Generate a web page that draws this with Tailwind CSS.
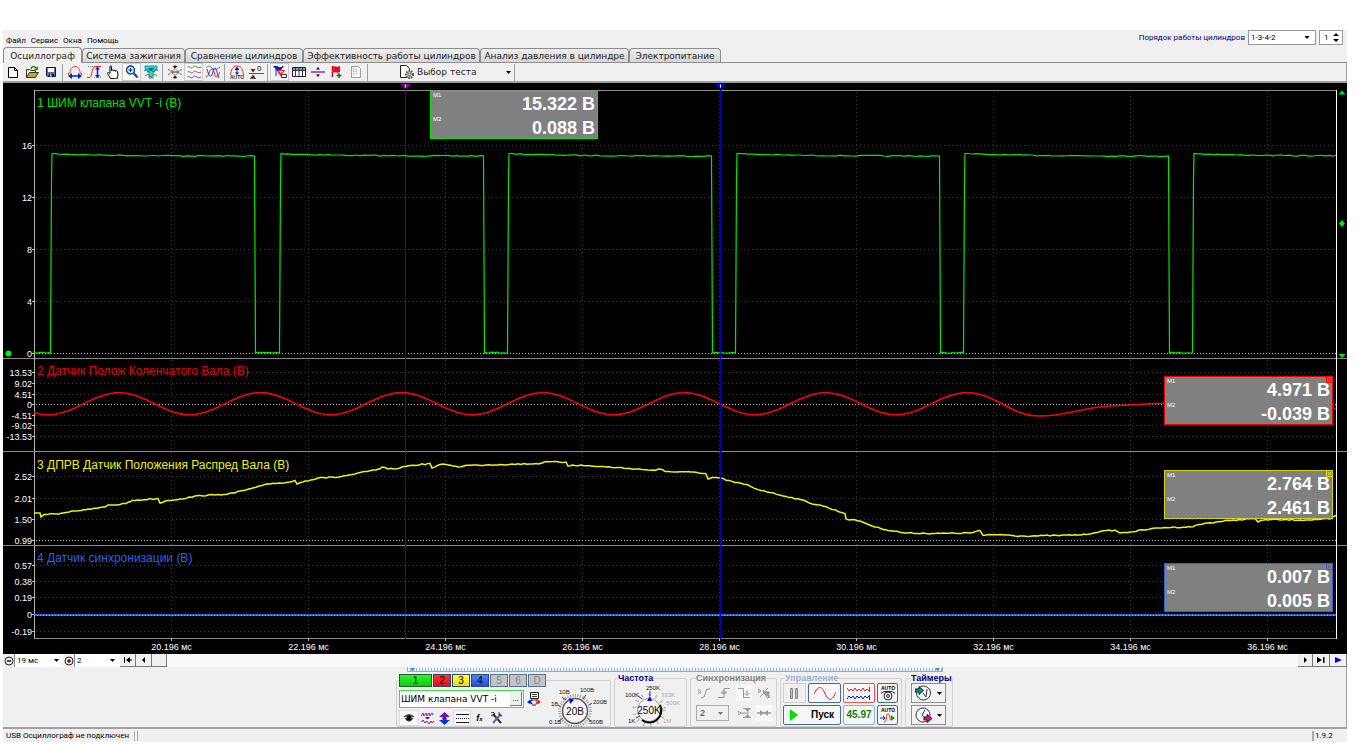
<!DOCTYPE html>
<html lang="ru">
<head>
<meta charset="utf-8">
<meta name="viewport" content="width=device-width, initial-scale=1">
<title>Осциллограф</title>
<script src="https://cdn.jsdelivr.net/npm/@tailwindcss/browser@4"></script>
</head>
<body class="bg-white pt-[30px] pl-[3px] pr-[10px] text-black font-['Liberation_Sans',sans-serif] text-[8px] leading-[10px]">
<svg width="0" height="0" class="absolute" aria-hidden="true">
  <defs>
    <pattern id="ticks" width="3" height="5" patternUnits="userSpaceOnUse"><rect width="3" height="5" fill="#eef5fb"/><rect width="1" height="3" y="1" fill="#8fb4d6"/></pattern>
    <symbol id="down" viewBox="0 0 5 3"><path d="M0 0h5L2.500 3z" fill="#000"/></symbol>
  </defs>
</svg>
<div class="bg-[#f0f0f0]">
  <header class="flex h-[17px] items-start justify-between font-['Roboto','Liberation_Sans',sans-serif]">
    <nav class="flex gap-[5px] pl-[3px] pt-[6px]">
      <a href="#">Файл</a><a href="#">Сервис</a><a href="#">Окна</a><a href="#">Помощь</a>
    </nav>
    <div class="flex items-center gap-[3px] pr-[4px]">
      <label for="order" class="text-[#000080]">Порядок работы цилиндров</label>
      <div class="flex h-[15px] w-[68px] items-center border border-[#999] bg-white pr-[5px]">
        <select id="order" class="min-w-0 flex-1 appearance-none bg-transparent pl-[2px]"><option>1-3-4-2</option></select>
        <svg class="pointer-events-none h-[3px] w-[6px]"><use href="#down"/></svg>
      </div>
      <div class="flex h-[15px] w-[24px] items-center border border-[#999] bg-white pl-[4px]">
        <input id="cyl" aria-label="Цилиндр" value="1" class="w-[9px] bg-transparent">
        <svg class="h-[9px] w-[6px]" viewBox="0 0 6 9"><path d="M0 3h6L3 0zM0 6h6L3 9z"/></svg>
      </div>
    </div>
  </header>

  <div role="tablist" class="flex h-[16px] items-end border-b border-[#8c8c8c] font-['DejaVu_Sans',sans-serif] text-[9px] leading-[12px] text-[#222]">
    <button role="tab" aria-selected="true" class="-mb-px h-[16px] w-[79px] rounded-t-sm border border-b-0 border-[#8c8c8c] bg-[#f0f0f0] whitespace-nowrap">Осциллограф</button>
    <button role="tab" class="h-[14px] w-[103px] rounded-t-sm border border-b-0 border-[#8c8c8c] bg-linear-to-b from-[#efefef] to-[#d6d6d6] whitespace-nowrap">Система зажигания</button>
    <button role="tab" class="h-[14px] w-[118px] rounded-t-sm border border-b-0 border-[#8c8c8c] bg-linear-to-b from-[#efefef] to-[#d6d6d6] whitespace-nowrap">Сравнение цилиндров</button>
    <button role="tab" class="h-[14px] w-[177px] rounded-t-sm border border-b-0 border-[#8c8c8c] bg-linear-to-b from-[#efefef] to-[#d6d6d6] whitespace-nowrap">Эффективность работы цилиндров</button>
    <button role="tab" class="h-[14px] w-[149px] rounded-t-sm border border-b-0 border-[#8c8c8c] bg-linear-to-b from-[#efefef] to-[#d6d6d6] whitespace-nowrap">Анализ давления в цилиндре</button>
    <button role="tab" class="h-[14px] w-[92px] rounded-t-sm border border-b-0 border-[#8c8c8c] bg-linear-to-b from-[#efefef] to-[#d6d6d6] whitespace-nowrap">Электропитание</button>
  </div>

  <div role="toolbar" class="flex h-[20px] items-center border-b-2 border-r border-[#a0a0a0]">
    <button aria-label="Новый" class="grid h-[18px] w-[19px] place-items-center"><svg width="14" height="14" viewBox="0 0 14 14"><path d="M2.500 2.500h6l3 3v7h-9z" fill="#fff" stroke="#000"/><path d="M8.500 2.500v3h3" fill="none" stroke="#000"/></svg></button>
    <button aria-label="Открыть" class="grid h-[18px] w-[19px] place-items-center"><svg width="14" height="14" viewBox="0 0 14 14"><path d="M1.500 12.500v-8h3l1 1h5v2" fill="#f5f0a0" stroke="#333"/><path d="M1.500 12.500l3-5h9l-3 5z" fill="#c8a820" stroke="#333"/><path d="M6 4c1-3 3-3 5-1" fill="none" stroke="#080" stroke-width="1.500"/><path d="M9 5l4 0 0-4z" fill="#0a0"/></svg></button>
    <button aria-label="Сохранить" class="grid h-[18px] w-[19px] place-items-center"><svg width="14" height="14" viewBox="0 0 14 14"><path d="M2.500 2.500h9v9h-8l-1-1z" fill="#5a6fa8" stroke="#101840"/><path d="M4 3h6v4H4z" fill="#fff"/><path d="M5 9h5v3H5z" fill="#101840"/><path d="M6 9.500h1.500v2H6z" fill="#fff"/></svg></button>
    <i class="mx-[2px] h-[17px] w-px bg-[#a0a0a0]"></i>
    <button aria-label="Период" class="grid h-[18px] w-[19px] place-items-center"><svg width="14" height="14" viewBox="0 0 14 14" fill="none"><path d="M.5 10V8h1.500C2 4 4 1.500 7 1.500S12 4 12 8h1.500v2" stroke="#f04040"/><path d="M2 11h10" stroke="#0020e0" stroke-width="1.500"/><path d="M0 11l4-3v6zM14 11l-4-3v6z" fill="#0020e0"/></svg></button>
    <button aria-label="Амплитуда" class="grid h-[18px] w-[19px] place-items-center"><svg width="14" height="14" viewBox="0 0 14 14" fill="none"><path d="M0 12.500h3C5 11 5 2 8 1.500h6" stroke="#f02020"/><path d="M1 1.500h6M7 12.500h7" stroke="#777" stroke-dasharray="1 1"/><path d="M10.500 4v7" stroke="#0020e0" stroke-width="1.500"/><path d="M10.500 1.500l2.500 3H8zM10.500 13l2.500-3H8z" fill="#0020e0"/></svg></button>
    <button aria-label="Рука" class="grid h-[18px] w-[19px] place-items-center"><svg width="14" height="14" viewBox="0 0 14 14"><path d="M4.500 13.500l-3-5c0-1.500 1.500-1 2.500 0V1.500c0-1 1.500-1 1.500 0V6c0-1.500 2-1.500 2 0 0-1.200 2-1.200 2 .3 0-1 2-1 2 .5l.5 3-1 4z" fill="#fff" stroke="#000"/></svg></button>
    <button aria-label="Лупа" class="grid h-[18px] w-[19px] place-items-center border border-[#ccc] bg-[#f9f9f9]"><svg width="14" height="14" viewBox="0 0 14 14"><circle cx="5.500" cy="5" r="4" fill="#c8e8f8" stroke="#123a70" stroke-width="1.300"/><path d="M3.500 5h4M5.500 3v4" stroke="#123a70"/><path d="M8.500 8l4 4.500" stroke="#1850a0" stroke-width="2.500"/></svg></button>
    <button aria-label="Фильтр" class="grid h-[18px] w-[19px] place-items-center"><svg width="14" height="14" viewBox="0 0 14 14" fill="none"><path d="M1 1h12v2L9 8v5H5V8L1 3z" fill="#20d8e0" stroke="#10a0a8"/><path d="M4 3h6l-3 3z" fill="#0a5060"/><path d="M0 6l2-2 2 3 3-2 3 2 2-3 2 2" stroke="#087880"/><path d="M1 11l3-2 3 3 3-3 3 2" stroke="#a06030"/></svg></button>
    <i class="mx-[2px] h-[17px] w-px bg-[#a0a0a0]"></i>
    <button aria-label="Сжать" class="grid h-[18px] w-[19px] place-items-center"><svg width="14" height="14" viewBox="0 0 14 14" fill="none"><path d="M0 4.500c3 0 4 5 7 5.500 3-.5 4-5.500 7-5.500" stroke="#208040" stroke-dasharray="2 .5"/><path d="M0 9.500C3 9.500 4 4.500 7 4c3 .5 4 5.500 7 5.500" stroke="#e03030" stroke-dasharray="2 .5"/><path d="M7 0v3M7 14v-3M4 7h6" stroke="#222"/><path d="M4.500 1h5L7 3.500zM4.500 13h5L7 10.500z" fill="#222"/></svg></button>
    <button aria-label="Раздельно" class="grid h-[18px] w-[19px] place-items-center border border-[#ccc] bg-[#f9f9f9]"><svg width="14" height="14" viewBox="0 0 14 14" fill="none"><path d="M0 2.500c2-2.500 3 .5 4.500.5s2.500-3 4.500-1.500 3 1.500 5 .5" stroke="#30904a"/><path d="M0 7.500c2-2.500 3 .5 4.500.5s2.500-3 4.500-1.500 3 1.500 5 .5" stroke="#e83030"/><path d="M0 12.500c2-2.500 3 .5 4.500.5s2.500-3 4.500-1.500 3 1.500 5 .5" stroke="#3040e8"/></svg></button>
    <button aria-label="Наложить" class="grid h-[18px] w-[19px] place-items-center"><svg width="14" height="14" viewBox="0 0 14 14" fill="none"><path d="M0 3c2-3 4-2 6 0s5 2 8-1" stroke="#30904a" stroke-dasharray="2 .5"/><path d="M0 12c3 0 3-8 6-8s2 8 4 8 3-3 4-5" stroke="#e82020"/><path d="M1 4c1 3 2 8 4 7s2-8 4-8 2 7 4 10" stroke="#2030e8"/></svg></button>
    <i class="mx-[2px] h-[17px] w-px bg-[#a0a0a0]"></i>
    <button aria-label="Авто" class="grid h-[18px] w-[19px] place-items-center"><svg width="14" height="14" viewBox="0 0 14 14" fill="none"><path d="M.5 10C1 5 2.500 1 7 1s6 4 6.500 9" stroke="#e83030"/><path d="M7 3v6" stroke="#102090"/><path d="M7 1.500L9.500 5h-5zM7 10L5 7.500h4z" fill="#102090"/><text x="0" y="14" font-size="5" font-weight="bold" fill="#333">AUTO</text></svg></button>
    <button aria-label="Ноль" class="grid h-[18px] w-[19px] place-items-center"><svg width="16" height="14" viewBox="0 0 16 14" fill="none"><path d="M1 8.500h15M2 13.500h6" stroke="#555"/><path d="M2.500 4h5L5 7.500zM2.500 13h5L5 9.500z" fill="#801818"/><text x="9" y="6" font-size="8" fill="#000">0</text></svg></button>
    <i class="mx-[2px] h-[17px] w-px bg-[#a0a0a0]"></i>
    <button aria-label="Маркеры" class="grid h-[18px] w-[19px] place-items-center border border-[#ccc] bg-[#f9f9f9]"><svg width="14" height="14" viewBox="0 0 14 14"><path d="M0 1h5v1h4V1h2L5 9V7z" fill="#1020c8"/><path d="M3 4v7" stroke="#1020c8"/><path d="M4.500 5h8L9 9v4L5 8z" fill="#f03030"/><path d="M6 6h4L8 8z" fill="#fff"/><path d="M8.500 9.500h5v3h-5z" fill="#fff" stroke="#203090"/></svg></button>
    <button aria-label="Таблица" class="grid h-[18px] w-[19px] place-items-center"><svg width="14" height="14" viewBox="0 0 14 14"><path d="M.5 2.500h13v9H.5z" fill="#fff" stroke="#223"/><path d="M1 3h12v2H1z" fill="#8098c8"/><path d="M3.500 3v9M7 3v9M10.500 3v9M0 5.500h14" stroke="#334"/></svg></button>
    <button aria-label="Линия" class="grid h-[18px] w-[19px] place-items-center"><svg width="14" height="14" viewBox="0 0 14 14"><path d="M0 7h14" stroke="#a030a0" stroke-width="1.500"/><path d="M5 4.500h4L7 2zM5 9.500h4L7 12z" fill="#111"/></svg></button>
    <button aria-label="Флаг" class="grid h-[18px] w-[19px] place-items-center"><svg width="14" height="14" viewBox="0 0 14 14"><path d="M2.500 1v11" stroke="#702020" stroke-width="1.500"/><path d="M2 2c3-2 4 1 8-1v6c-4 2-5-1-8 1z" fill="#e81020"/><path d="M9 8v5M6.500 10.500h5" stroke="#0a7020" stroke-width="1.500"/></svg></button>
    <button aria-label="Отчёт" class="grid h-[18px] w-[19px] place-items-center"><svg width="14" height="14" viewBox="0 0 14 14" fill="none" stroke="#a0a0a0"><path d="M2.500 1.500h7l2 2v9h-9z" fill="#f6f6f6"/><path d="M4 4h2M4 6.500h2M4 9h2M7 4v6" stroke-dasharray="1 1"/></svg></button>
    <i class="mx-[2px] h-[17px] w-px bg-[#a0a0a0]"></i>
    <button class="ml-[29px] flex h-[18px] w-[115px] items-center gap-[2px] font-['DejaVu_Sans',sans-serif] text-[9px] text-[#222]">
      <svg width="16" height="14" viewBox="0 0 16 14"><path d="M8 12.500H1.500v-12h6l3 3v2" fill="#fff" stroke="#222"/><circle cx="10.500" cy="9.500" r="3.500" fill="#cfe0cf" stroke="#445544" stroke-dasharray="1.500 1" stroke-width="2"/><circle cx="10.500" cy="9.500" r="1.500" fill="#fff" stroke="#344"/></svg>
      <span class="flex-1 text-left">Выбор теста</span>
      <svg class="mr-[3px] h-[3px] w-[5px]"><use href="#down"/></svg>
    </button>
    <i class="h-[17px] w-px bg-[#a0a0a0]"></i>
  </div>

  <main class="relative h-[571px] overflow-hidden bg-black text-[9px] leading-[10px] text-white">
    <svg class="block h-full w-full" viewBox="3 83 1344 571" preserveAspectRatio="none" fill="none">
      <g id="grid" stroke="#3a3a3a" stroke-dasharray="1 3"></g>
      <g id="zero" stroke="#b8b8b8" stroke-dasharray="1 2"></g>
      <path d="M34 90.500h1303M3 358.500h1344M3 451.500h1344M3 545.500h1344M34 638.500h1303" stroke="#8a8a8a"/>
      <path d="M34.500 90v549" stroke="#b0b0b0"/>
      <path d="M1336.500 90v549" stroke="#fff"/>
      <g id="notches" stroke="#c0c0c0"></g>
      <path d="M405.500 88v551" stroke="#4a0a4a"/>
      <path id="t1" stroke="#00e800" stroke-width="1.200"/>
      <path id="t2" stroke="#f00" stroke-width="1.600"/>
      <path id="t3" stroke="#f4f400" stroke-width="1.500"/>
      <path d="M34 615h1302" stroke="#2a62e8" stroke-width="2"/>
      <path d="M34 615.500h1302" stroke="#90b0f0" stroke-dasharray="1 2"/>
      <path d="M720.500 88v551" stroke="#0000c8" stroke-width="1.500"/>
      <path d="M400 84h11l-5.500 5z" fill="#900090"/><path d="M715 84h11l-5.500 5z" fill="#00f"/>
      <path d="M405.500 84.500v3M720.500 84.500v3" stroke="#fff"/>
      <path d="M1338.500 94.500h7l-3.500-4zM1342 220l3 3.500-3 3.500-3-3.500zM1338.500 354h7l-3.500 4z" fill="#0e0"/>
      <circle cx="8.500" cy="353.500" r="3" fill="#0e0"/>
    </svg>
    <div id="labels"></div>
    <h2 class="absolute left-[34px] top-[13px] text-[12px] leading-[14px] text-[#00e000]">1 ШИМ клапана VVT -i (В)</h2>
    <h2 class="absolute left-[34px] top-[281px] text-[12px] leading-[14px] text-[#e80000]">2 Датчик Полож Коленчатого Вала (В)</h2>
    <h2 class="absolute left-[34px] top-[375px] text-[12px] leading-[14px] text-[#f0f000]">3 ДПРВ Датчик Положения Распред Вала (В)</h2>
    <h2 class="absolute left-[34px] top-[468px] text-[12px] leading-[14px] text-[#2a62e8]">4 Датчик синхронизации (В)</h2>

    <section class="absolute left-[427px] top-[8px] flex h-[48px] w-[168px] flex-col justify-center border border-[#00f000] bg-[#808080] pl-[2px] pr-[2px]">
      <div class="flex h-[23px] justify-between"><span class="text-[6px] leading-[6px]">M1</span><b class="text-[18px] leading-[24px]">15.322 В</b></div>
      <div class="flex h-[23px] justify-between"><span class="text-[6px] leading-[8px]">M2</span><b class="text-[18px] leading-[26px]">0.088 В</b></div>
      <button aria-label="Закрыть" class="absolute right-0 top-0"><svg width="6" height="6" viewBox="0 0 6 6" fill="none" stroke="#00f000"><path d="M.5 0v5.500H6M2 1l3 3M5 1L2 4"/></svg></button>
    </section>
    <section class="absolute right-[14px] top-[293px] flex h-[49px] w-[169px] flex-col justify-center border border-[#f00000] bg-[#808080] pl-[2px] pr-[2px]">
      <div class="flex h-[23px] justify-between"><span class="text-[6px] leading-[6px]">M1</span><b class="text-[18px] leading-[24px]">4.971 В</b></div>
      <div class="flex h-[23px] justify-between"><span class="text-[6px] leading-[8px]">M2</span><b class="text-[18px] leading-[26px]">-0.039 В</b></div>
      <button aria-label="Закрыть" class="absolute right-0 top-0"><svg width="6" height="6" viewBox="0 0 6 6" fill="none" stroke="#f00000"><path d="M.5 0v5.500H6M2 1l3 3M5 1L2 4"/></svg></button>
    </section>
    <section class="absolute right-[14px] top-[387px] flex h-[49px] w-[169px] flex-col justify-center border border-[#d8d800] bg-[#808080] pl-[2px] pr-[2px]">
      <div class="flex h-[23px] justify-between"><span class="text-[6px] leading-[6px]">M1</span><b class="text-[18px] leading-[24px]">2.764 В</b></div>
      <div class="flex h-[23px] justify-between"><span class="text-[6px] leading-[8px]">M2</span><b class="text-[18px] leading-[26px]">2.461 В</b></div>
      <button aria-label="Закрыть" class="absolute right-0 top-0"><svg width="6" height="6" viewBox="0 0 6 6" fill="none" stroke="#e8e800"><path d="M.5 0v5.500H6M2 1l3 3M5 1L2 4"/></svg></button>
    </section>
    <section class="absolute right-[14px] top-[480px] flex h-[49px] w-[169px] flex-col justify-center border border-[#2a62e8] bg-[#808080] pl-[2px] pr-[2px]">
      <div class="flex h-[23px] justify-between"><span class="text-[6px] leading-[6px]">M1</span><b class="text-[18px] leading-[24px]">0.007 В</b></div>
      <div class="flex h-[23px] justify-between"><span class="text-[6px] leading-[8px]">M2</span><b class="text-[18px] leading-[26px]">0.005 В</b></div>
      <button aria-label="Закрыть" class="absolute right-0 top-0"><svg width="6" height="6" viewBox="0 0 6 6" fill="none" stroke="#2a62e8"><path d="M.5 0v5.500H6M2 1l3 3M5 1L2 4"/></svg></button>
    </section>
  </main>

  <div class="flex h-[13px] items-stretch bg-[#f9f9f9] font-['Roboto','Liberation_Sans',sans-serif]">
    <button aria-label="Уменьшить" class="grid w-[12px] place-items-center border-r border-[#888] bg-[#f0f0f0]"><svg width="10" height="10" viewBox="0 0 10 10" fill="none"><circle cx="5" cy="5" r="4" stroke="#222"/><path d="M3 5h4" stroke="#0000a0" stroke-width="1.500"/></svg></button>
    <div class="flex w-[48px] items-center bg-white pr-[4px]"><select aria-label="Развёртка" class="min-w-0 flex-1 appearance-none pl-[2px]"><option>19 мс</option></select><svg class="pointer-events-none h-[3px] w-[5px]"><use href="#down"/></svg></div>
    <button aria-label="Увеличить" class="grid w-[12px] place-items-center border-r border-[#888] bg-[#f0f0f0]"><svg width="10" height="10" viewBox="0 0 10 10" fill="none"><circle cx="5" cy="5" r="4" stroke="#222"/><path d="M3 5h4M5 3v4" stroke="#a00000" stroke-width="1.500"/></svg></button>
    <div class="flex w-[45px] items-center bg-white pr-[5px]"><select aria-label="Масштаб" class="min-w-0 flex-1 appearance-none pl-[2px]"><option>2</option></select><svg class="pointer-events-none h-[3px] w-[5px]"><use href="#down"/></svg></div>
    <button aria-label="В начало" class="grid w-[16px] place-items-center border-b border-r border-[#777] bg-[#f0f0f0]"><svg width="9" height="6" viewBox="0 0 9 6"><path d="M1 0h1v6H1zM7 0v6L3 3zM7 2.500h2v1H7z"/></svg></button>
    <button aria-label="Назад" class="grid w-[16px] place-items-center border-b border-r border-[#777] bg-[#f0f0f0]"><svg width="4" height="6" viewBox="0 0 4 6"><path d="M3 0v6L0 3z"/></svg></button>
    <button aria-label="Ползунок" class="w-[15px] border-b border-r border-[#777] bg-[#f0f0f0]"></button>
    <div class="flex-1"></div>
    <button aria-label="Вперёд" class="grid w-[15px] place-items-center border-b border-r border-[#777] bg-[#f0f0f0]"><svg width="4" height="6" viewBox="0 0 4 6"><path d="M1 0v6L4 3z"/></svg></button>
    <button aria-label="В конец" class="grid w-[17px] place-items-center border-b border-r border-[#777] bg-[#f0f0f0]"><svg width="8" height="6" viewBox="0 0 8 6"><path d="M0 0v6l5-3zM6 0h1.500v6H6z"/></svg></button>
    <button aria-label="Воспроизвести" class="grid w-[17px] place-items-center border-b border-r border-[#777] bg-[#f0f0f0]"><svg width="7" height="6" viewBox="0 0 7 6"><path d="M0 0v6l7-3z" fill="#00f"/></svg></button>
  </div>

  <footer>
    <div class="flex h-[62px] flex-col items-center border-b-2 border-r border-[#a0a0a0]">
      <svg class="h-[5px] w-[536px] shrink-0" viewBox="0 0 536 5"><rect width="536" height="5" fill="url(#ticks)"/><path d="M.5 0v5M535.500 0v5M0 4.500h536" stroke="#9ab"/><path d="M3 1h5L5.500 4zM528 1h5l-2.500 3z" fill="#2090f0"/></svg>
      <div class="flex h-[55px] items-stretch gap-[3px] pt-[2px]">
        <fieldset class="w-[212px] rounded-xs border border-[#d2d2d2] pl-[2px]">
          <legend class="flex h-[13px] gap-px text-[10px] leading-[11px]">
            <button class="w-[33px] border border-[#225c34] bg-linear-to-b from-[#30f030] to-[#00d000]">1</button>
            <button class="w-[18px] border border-[#304870] bg-linear-to-b from-[#ff3030] to-[#e01010]">2</button>
            <button class="w-[18px] border border-[#304870] bg-linear-to-b from-[#ffff40] to-[#e8e000]">3</button>
            <button class="w-[18px] border border-[#304870] bg-linear-to-b from-[#5080ff] to-[#2050e8]">4</button>
            <button class="w-[18px] border border-[#50749c] bg-[#c4c4c4] text-[#888]">5</button>
            <button class="w-[18px] border border-[#50749c] bg-[#c4c4c4] text-[#888]">6</button>
            <button class="w-[18px] border border-[#50749c] bg-[#c4c4c4] text-[#888]">D</button>
          </legend>
          <div class="flex">
            <div class="flex flex-col gap-[2px] pt-[3px]">
              <div class="flex items-center gap-[3px]">
                <div class="flex h-[18px] w-[125px] items-center border border-[#40e040] bg-white p-px">
                  <input aria-label="Имя канала" value="ШИМ клапана VVT -i" class="h-[12px] min-w-0 flex-1 bg-transparent font-['DejaVu_Sans',sans-serif] text-[9px]">
                  <button class="h-[14px] w-[12px] border-b border-r border-[#777] bg-[#f0f0f0] leading-[6px]">...</button>
                </div>
                <svg width="14" height="14" viewBox="0 0 14 14" fill="none"><path d="M3.500 .5h8v6h-8z" stroke="#222"/><path d="M5 2.500h5M5 4.500h5M4 8h7" stroke="#444"/><path d="M5 8l-2 1.500L5 12" stroke="#0020e0" stroke-width="1.500"/><path d="M0 10l3.500-2.500v5z" fill="#0020e0"/><path d="M9 12l2-2.500L9 8" stroke="#e02020" stroke-width="1.500"/><path d="M14 10l-3.500-2.500v5z" fill="#e02020"/><path d="M5 13h4" stroke="#222"/></svg>
              </div>
              <div class="flex">
                <button aria-label="Показать" class="grid h-[16px] w-[20px] place-items-center border border-[#ddd] bg-[#f8f8f8]"><svg width="10" height="8" viewBox="0 0 10 8"><path d="M0 3c3-3 7-3 10 0M1 4c2 4 6 4 8 0" stroke="#222" fill="#666"/><circle cx="5" cy="4" r="2.500"/></svg></button>
                <button aria-label="Фильтр шума" class="grid h-[16px] w-[17px] place-items-center"><svg width="13" height="13" viewBox="0 0 13 13" fill="none" stroke="#a010a0"><path d="M0 4l2-3 1 3 2-3 1 3 2-3 1 3 2-3 1 2M0 10l2-2 2 3 2-2 2 3 2-3 1 2 2-2"/><path d="M4 5h5L6.500 7.500z" fill="#222" stroke="none"/></svg></button>
                <button aria-label="Смещение" class="grid h-[16px] w-[17px] place-items-center"><svg width="11" height="13" viewBox="0 0 11 13"><path d="M5.500 0L11 5H7.500v2h-4V5H0z" fill="#8010a0"/><path d="M5.500 13L11 8H7.500V6h-4v2H0z" fill="#1030e0"/></svg></button>
                <button aria-label="Линии" class="grid h-[16px] w-[18px] place-items-center border border-[#ddd] bg-[#f8f8f8]"><svg width="13" height="11" viewBox="0 0 13 11" stroke="#222"><path d="M0 1.500h13M0 9.500h13"/><path d="M0 5.500h13" stroke-dasharray="1 1"/></svg></button>
                <button aria-label="Функция" class="grid h-[16px] w-[17px] place-items-center text-[9px] italic"><b>f<small class="text-[6px]">x</small></b></button>
                <button aria-label="Настройки" class="grid h-[16px] w-[17px] place-items-center"><svg width="12" height="12" viewBox="0 0 12 12" fill="none"><path d="M2 2l8 9" stroke="#333" stroke-width="2"/><path d="M10 2l-8 9" stroke="#5070a0" stroke-width="2"/><path d="M8 0v3l3 1M0 1l2-1 2 2-2 2-2-1" stroke="#333"/></svg></button>
              </div>
            </div>
            <svg class="ml-[7px]" width="62" height="42" viewBox="546 686 62 42" font-size="6" fill="#111">
              <circle cx="573" cy="710" r="15.500" fill="none" stroke="#999" stroke-width="3" stroke-dasharray="1 1.500"/>
              <circle cx="573" cy="710" r="12.500" fill="#f4f4f4" stroke="#555" stroke-width="1.500"/>
              <path d="M567 697l5 2-4 4z" fill="#00f"/><text x="573" y="714" font-size="10" text-anchor="middle">20В</text>
              <path d="M560 696l4 3M584 694l-3 4M556 704l3 2M590 702l-3 2M557 720l4-3M589 720l-4-3" stroke="#444"/>
              <text x="557" y="693">10В</text><text x="578" y="691">100В</text><text x="549" y="705">1В</text><text x="591" y="703">200В</text><text x="547" y="723">0.1В</text><text x="587" y="723">500В</text>
            </svg>
          </div>
        </fieldset>
        <fieldset class="w-[73px] rounded-xs border border-[#d2d2d2]">
          <legend class="ml-[3px] text-[9px] leading-[9px] font-bold text-[#000080]">Частота</legend>
          <svg width="71" height="44" viewBox="612 683 71 44" font-size="6" fill="#111">
            <circle cx="646" cy="710" r="15" fill="none" stroke="#aaa" stroke-width="4" stroke-dasharray="1 6"/>
            <circle cx="646" cy="710" r="11.500" fill="#f4f4f4" stroke="#999"/><path d="M657 705a12 12 0 0 1-18 15" stroke="#000" stroke-width="2" fill="none"/>
            <path d="M644 701h5l-2-5z" fill="#00f"/><path d="M647 691v5M635 696l4 3M633 718l4-2" stroke="#333"/>
            <text x="646" y="714" font-size="10" text-anchor="middle">250K</text>
            <text x="643" y="690">250K</text><text x="622" y="697">100K</text><text x="625" y="723">1K</text>
            <g fill="#aaa"><text x="658" y="697">333K</text><text x="663" y="705">500K</text><text x="660" y="723">1M</text></g>
          </svg>
        </fieldset>
        <fieldset class="w-[87px] rounded-xs border border-[#d2d2d2] pl-[5px]" disabled>
          <legend class="text-[9px] leading-[9px] font-bold text-[#808080]">Синхронизация</legend>
          <div class="flex h-[20px] items-center gap-[4px]">
            <button aria-label="Авто фронт" class="grid size-[16px] place-items-center"><svg width="12" height="12" viewBox="0 0 12 12" fill="none" stroke="#999"><path d="M0 2v5l3-2zM3 11l3-1 3-8h3"/></svg></button>
            <button aria-label="Фронт" class="grid size-[16px] place-items-center"><svg width="12" height="12" viewBox="0 0 12 12" fill="none" stroke="#999"><path d="M0 10.500h6v-9h6M3.500 6h5M6 3L3.500 6h5z"/></svg></button>
            <button aria-label="Спад" class="grid size-[16px] place-items-center bg-[#f8f8f8]"><svg width="12" height="12" viewBox="0 0 12 12" fill="none" stroke="#999"><path d="M0 1.500h5.500v9H12M9 3v5M6.500 6L9 8.500 11.500 6"/></svg></button>
            <button aria-label="Любой" class="grid size-[16px] place-items-center"><svg width="12" height="12" viewBox="0 0 12 12" fill="none" stroke="#999"><path d="M0 2v4l3-2zM2 10l8-9M5 3l4 8 3-1"/><path d="M5 5h6v5z" fill="#999"/></svg></button>
          </div>
          <div class="flex h-[20px] items-center">
            <div class="mr-[7px] flex h-[16px] w-[33px] items-center border border-[#aaa] pr-[5px]"><select aria-label="Канал синхронизации" class="min-w-0 flex-1 appearance-none pl-[3px] text-[9px] text-[#333]"><option>2</option></select><svg class="h-[3px] w-[5px] opacity-50"><use href="#down"/></svg></div>
            <button aria-label="Уровень" class="grid size-[16px] place-items-center"><svg width="13" height="12" viewBox="0 0 13 12" fill="none" stroke="#999"><path d="M0 4v4l3-2zM3 6h8M5 1.500h8M5 10.500h8"/><path d="M7 2h5L9.500 5zM7 10h5L9.500 7z" fill="#999" stroke="none"/></svg></button>
            <button aria-label="Центр" class="ml-[4px] grid size-[16px] place-items-center bg-[#f8f8f8]"><svg width="14" height="8" viewBox="0 0 14 8"><path d="M0 4h14" stroke="#999" stroke-width="1.500"/><path d="M3 1l4 3-4 3zM11 1L7 4l4 3z" fill="#999"/></svg></button>
          </div>
        </fieldset>
        <fieldset class="w-[122px] rounded-xs border border-[#d2d2d2] pl-[2px]">
          <legend class="ml-[2px] text-[9px] leading-[9px] font-bold text-[#9ab4d0]">Управление</legend>
          <div class="grid h-[42px] grid-cols-[23px_33px_32px_21px] gap-x-[2px] gap-y-[2px]">
            <button aria-label="Пауза" class="grid place-items-center border border-[#d0d0d0]"><svg width="9" height="11" viewBox="0 0 9 11"><path d="M.5.5h2v10h-2zM5.500.5h2v10h-2z" fill="#bbb" stroke="#888"/></svg></button>
            <button aria-label="Синус" class="grid place-items-center rounded-xs border border-[#4a6a8c] bg-[#f6f6f6]"><svg width="22" height="13" viewBox="0 0 22 13"><path d="M0 7C5-2 7-2 11 6.500S18 14 22 5" fill="none" stroke="#e02020"/></svg></button>
            <button aria-label="Сигналы" class="grid place-items-center rounded-xs border border-[#f05050] bg-[#f6f6f6]"><svg width="24" height="13" viewBox="0 0 24 13" fill="none"><path d="M0 1l2 3 2-2 2 2 2-3 2 3 2-2 2 2 2-3 2 3 2-2 2 2M22.500 0v5" stroke="#e02020"/><path d="M0 12l2-3 2 2 2-2 2 3 2-3 2 2 2-2 2 3 2-3 2 2 2-2M22.500 8v5" stroke="#0020e0"/></svg></button>
            <button aria-label="Авто запуск" class="grid place-items-center rounded-xs border border-[#4a6a8c] bg-[#f6f6f6]"><svg width="16" height="16" viewBox="0 0 16 16" fill="none"><text x="1" y="5" font-size="5" font-weight="bold" fill="#000">AUTO</text><circle cx="8" cy="11" r="4" stroke="#222"/><circle cx="8" cy="11" r="1.500" stroke="#222"/><path d="M1 8.500l3-2M15 8.500l-3-2M4 6.500h8" stroke="#0020e0"/></svg></button>
            <button class="col-span-2 flex items-center gap-[13px] rounded-xs border border-[#4a6a8c] bg-[#f6f6f6] pl-[6px] text-[10px] font-bold"><svg width="8" height="12" viewBox="0 0 8 12"><path d="M0 0v12l8-6z" fill="#0d0"/></svg>Пуск</button>
            <output class="grid place-items-center rounded-xs border border-[#8ab0d8] bg-[#f6f6f6] text-[10px] font-bold text-[#108010]">45.97</output>
            <button aria-label="Авто старт" class="grid place-items-center rounded-xs border border-[#4a6a8c] bg-[#f6f6f6]"><svg width="16" height="16" viewBox="0 0 16 16" fill="none"><text x="1" y="5" font-size="5" font-weight="bold" fill="#000">AUTO</text><path d="M4 15c4 0 1-8 4-8s1 6 3 6" stroke="#e02020"/><path d="M0 11h5M3 9l2 2-2 2" stroke="#0020e0"/><path d="M11 8v6l4-3z" fill="#0a0"/></svg></button>
          </div>
        </fieldset>
        <fieldset class="w-[48px] rounded-xs border border-[#d2d2d2] pl-[5px]">
          <legend class="text-[9px] leading-[9px] font-bold whitespace-nowrap text-[#000080]">Таймеры</legend>
          <div class="flex h-[42px] flex-col gap-[2px]">
            <button aria-label="Таймер старта" class="flex w-[35px] flex-1 items-center justify-center gap-[5px] border border-[#909090] bg-[#f3f3f3]"><svg width="17" height="16" viewBox="0 0 17 16" fill="none"><circle cx="8.500" cy="8" r="7" fill="#fafafa" stroke="#333"/><path d="M8 8l3 4 1-8" stroke="#333"/><path d="M0 4h4V1.500L8.500 5.500 4 9.500V7H0z" fill="#109090" stroke="#033"/></svg><svg class="h-[3px] w-[5px]"><use href="#down"/></svg></button>
            <button aria-label="Таймер стопа" class="flex w-[35px] flex-1 items-center justify-center gap-[5px] border border-[#909090] bg-[#f3f3f3]"><svg width="17" height="16" viewBox="0 0 17 16" fill="none"><circle cx="8" cy="8" r="7" fill="#fafafa" stroke="#333"/><path d="M7 8l3-5M7 8l3 3" stroke="#333"/><path d="M9 10h3V7.500l5 4-5 4V13H9z" fill="#d010a0" stroke="#502"/></svg><svg class="h-[3px] w-[5px]"><use href="#down"/></svg></button>
          </div>
        </fieldset>
      </div>
    </div>
    <div class="flex h-[13px] items-center pt-px font-['Roboto','Liberation_Sans',sans-serif]">
      <span class="w-[132px] border-r border-[#aaa] pl-[3px] whitespace-nowrap">USB Осциллограф не подключен</span>
      <span class="ml-[2px] h-[10px] flex-1 border-r-2 border-l border-[#aaa]"></span>
      <span class="w-[33px] pl-px">1.9.2</span>
    </div>
  </footer>
</div>

<script>
const TOP = 83, LEFT = 3, WIDTH = 1344;
const marks = [
  ['16',146],['12',198],['8',250],['4',302],['0',354,1],
  ['13.53',373],['9.02',384],['4.51',395],['0',405,1],['-4.51',416],['-9.02',426],['-13.53',437],
  ['2.52',477],['2.01',499],['1.50',520],['0.99',541,1],
  ['0.57',566],['0.38',582],['0.19',598],['0',615],['-0.19',632]
];
let grid = '', zero = '', notch = '', html = '';
for (const [t, y, z] of marks) {
  const line = `<path d="M36 ${y - .5}H1336"/>`;
  if (z) zero += line; else grid += line;
  notch += `<path d="M32 ${y - .5}h3"/>`;
  html += `<span class="absolute left-0 w-[29px] text-right whitespace-nowrap" style="top:${y - TOP - 5}px">${t}</span>`;
}
for (let i = 0; i < 9; i++) {
  const x = 171.5 + 137 * i;
  grid += `<path d="M${x} 92V638"/>`;
  notch += `<path d="M${x} 638v3"/>`;
  html += `<span class="absolute top-[559px] w-[60px] -translate-x-1/2 text-center" style="left:${(x - LEFT) / WIDTH * 100}%">${20 + 2 * i}.196 мс</span>`;
}
document.getElementById('grid').innerHTML = grid;
document.getElementById('zero').innerHTML = zero;
document.getElementById('notches').innerHTML = notch;
document.getElementById('labels').innerHTML = html;

let seed = 7;
const noise = a => { seed = (seed * 16807) % 2147483647; return (seed / 2147483647 - .5) * 2 * a; };

const rise = [51, 280, 508, 736, 964, 1193], fall = [254, 483, 711, 939, 1168, 1336];
let g = 'M34 352.500';
rise.forEach((r, i) => {
  const from = i ? fall[i - 1] + 2 : 34;
  for (let x = from; x < r - 1; x += 3) g += `L${x} ${(352.7 + noise(.6)).toFixed(1)}`;
  g += `L${r - .5} 353L${r + .5} 180L${r + 1} 153.500`;
  for (let x = r + 4; x < fall[i]; x += 4) g += `L${x} ${(156.1 - 2.5 * Math.exp((r - x) / 60) + noise(.5)).toFixed(1)}`;
  g += i < 5 ? `L${fall[i] + .5} 156L${fall[i] + 1.5} 353` : 'L1336 155';
});
document.getElementById('t1').setAttribute('d', g);

let r = '';
for (let x = 34; x <= 1000; x += 3) r += `${r ? 'L' : 'M'}${x} ${(403.7 - 11 * Math.cos((x - 119) / 141.3 * 2 * Math.PI)).toFixed(1)}`;
r += 'C1015 411 1025 416 1040 416C1065 416 1080 408 1110 406L1130 405L1155 403.500H1333V409H1336';
document.getElementById('t2').setAttribute('d', r);

const y3 = [34,513,40,513,41,517,44,514.5,60,513.5,72,511,85,510,105,507,108,505,120,504.5,130,502,132,500.5,158,498.5,160,503,165,501,180,499,200,495.5,215,495,235,493,240,491,250,489,262,485.5,270,484,290,482,295,480.5,297,484,305,481,320,477.5,335,477.5,352,474.5,380,469,382,467,388,469,400,468,407,466,430,463.5,432,468,440,464.5,450,465,458,467,465,465.5,500,464.5,540,463.5,544,462,566,462,568,466,572,465,600,466.5,630,468.5,655,470.5,660,469,665,471.5,690,472,706,474,708,479,712,477.5,720,478,735,482.5,748,485,755,488.5,780,495,800,499.5,815,504.5,820,505,845,513.5,846,519,860,521,875,527,885,529.5,905,533,940,533.5,970,533,980,530.5,983,535.5,1000,534.5,1020,536,1060,535.5,1085,534.5,1100,531.5,1115,530,1120,533,1130,532,1150,529,1165,527.5,1190,527,1204,523.5,1230,520.5,1255,518.5,1258,522,1265,519.5,1300,520,1330,519,1334,516.5,1336,515.5];
let y = `M${y3[0]} ${y3[1]}`;
for (let i = 2; i < y3.length; i += 2) {
  const x0 = y3[i - 2], a = y3[i - 1], x1 = y3[i], b = y3[i + 1];
  for (let x = x0 + 3; x < x1; x += 3) y += `L${x} ${(a + (b - a) * (x - x0) / (x1 - x0) + noise(.6)).toFixed(1)}`;
  y += `L${x1} ${b}`;
}
document.getElementById('t3').setAttribute('d', y);
</script>
</body>
</html>
